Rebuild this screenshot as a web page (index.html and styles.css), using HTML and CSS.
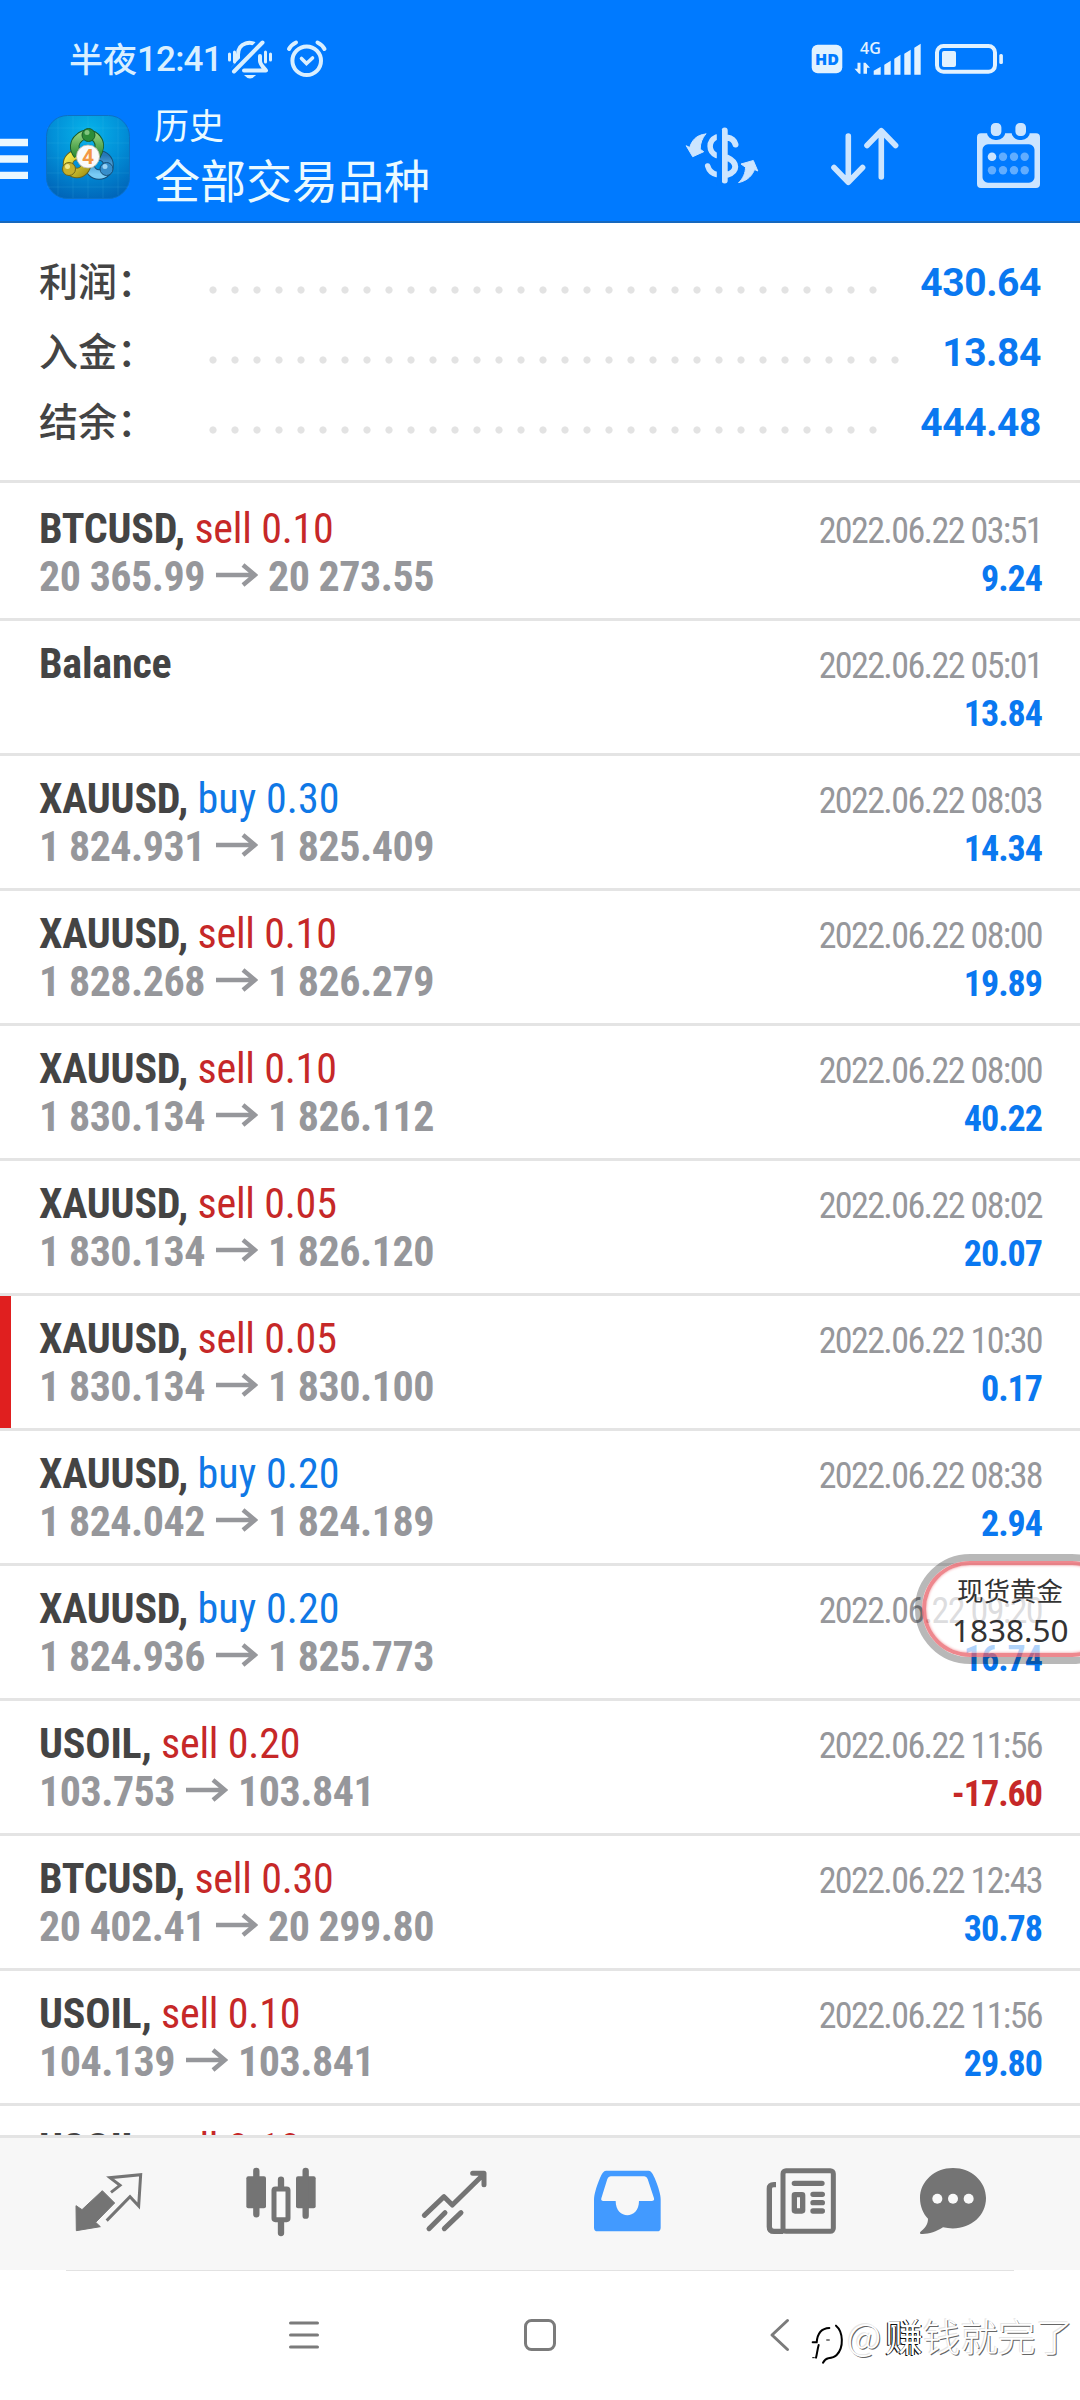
FILE: index.html
```html
<!DOCTYPE html>
<html lang="zh-CN">
<head>
<meta charset="utf-8">
<title>历史</title>
<link rel="stylesheet" href="styles.css">
</head>
<body>
<svg width="0" height="0" class="defs">
  <defs>
    <symbol id="arrow" viewBox="0 0 42 24"><path d="M0 12H39M27 2l12 10-12 10" fill="none" stroke="#96979b" stroke-width="4.4"/></symbol>
  </defs>
</svg>
<div class="screen">
  <header class="header">
    <div class="status">
      <span class="clock"><span class="clock-cjk">半夜</span><span class="clock-num">12:41</span></span>
      <svg class="status-left" width="102" height="42" viewBox="226 39 102 42" fill="none" stroke="#d9efff" stroke-linecap="round">
        <path d="M233 68.500c3-3 5-5 5-9v-5c0-12 14-15 20-8M260 56v5c0 3 3 6 6 9.500h-22" stroke-width="4" stroke-linejoin="round"/>
        <path d="M234 71l28-29" stroke="#007aff" stroke-width="9"/>
        <path d="M234 71.500l28.500-29" stroke-width="4"/>
        <path d="M229.500 54v6M234.500 52v10M265.500 52v10M270.500 54v6" stroke-width="3"/>
        <path d="M244 75h12q-6 7-12 0z" fill="#d9efff" stroke="none"/>
        <circle cx="306.700" cy="60.700" r="14.300" stroke-width="4"/>
        <path d="M301.500 58.500l5 5 6-5.500" stroke-width="3.600"/>
        <path d="M289 49q2-4 7-6.500M324.500 49q-2-4-7-6.500" stroke-width="4"/>
      </svg>
      <svg class="status-right" width="194" height="40" viewBox="811 37 194 40" fill="#e2f2ff">
        <rect x="811.700" y="44.700" width="30.600" height="28.500" rx="6"/>
        <text class="hd" x="827" y="64.700" text-anchor="middle">HD</text>
        <text class="net" x="860" y="54.300">4G</text>
        <path d="M860.500 62.700v11l-1.500 0-4.500-5h3v-6zM863.500 73.700v-11l2 0 4.500 5h-3v6z"/>
        <path d="M873.700 74.700v-4l7-4v8zM884.300 74.700v-10l6.400-4v14zM894.300 74.700v-16l6.200-4v20zM904.300 74.700v-21l6.400-4v25zM914.300 74.700v-27l6.400-4v31z"/>
        <rect x="937" y="46" width="58" height="25.700" rx="6.500" fill="none" stroke="#e2f2ff" stroke-width="4"/>
        <rect x="942" y="51" width="14" height="16" rx="2"/>
        <rect x="999.300" y="54" width="3.600" height="10" rx="1.500"/>
      </svg>
    </div>
    <div class="bar">
      <svg class="menu" width="28" height="42" viewBox="0 138 28 42" fill="#ebf8ff"><path d="M0 138.700h28v7.500H0zM0 155.200h28v7.500H0zM0 171.700h28v7.300H0z"/></svg>
      <svg class="logo" width="84" height="84" viewBox="0 0 84 84">
        <defs>
          <radialGradient id="bg" cx=".5" cy=".2" r=".85"><stop offset="0" stop-color="#06b3ea"/><stop offset=".5" stop-color="#0290d8"/><stop offset="1" stop-color="#0064b8"/></radialGradient>
          <linearGradient id="g" x2="0" y2="1"><stop stop-color="#8fd07c"/><stop offset="1" stop-color="#2e8b35"/></linearGradient>
          <linearGradient id="y" x2="1" y2="1"><stop stop-color="#f4ea4e"/><stop offset="1" stop-color="#ab9b18"/></linearGradient>
          <linearGradient id="b" x2="0" y2="1"><stop stop-color="#2678b8"/><stop offset="1" stop-color="#79cbf5"/></linearGradient>
        </defs>
        <rect x=".5" y=".5" width="83" height="83" rx="21" fill="url(#bg)" stroke="#0c70c4"/>
        <path d="M12 3v77M27 1v82M42 1v82M57 1v82M72 3v77M1 13h82M1 28h82M1 43h82M1 58h82M1 72h82" stroke="#5cc8f0" stroke-opacity=".13"/>
        <g fill="none">
          <circle cx="53" cy="50" r="9.500" stroke="#174f77" stroke-width="10.500"/>
          <circle cx="53" cy="50" r="9.500" stroke="url(#b)" stroke-width="8.500"/>
          <circle cx="31" cy="49" r="9" stroke="#6b651b" stroke-width="10.500"/>
          <circle cx="31" cy="49" r="9" stroke="url(#y)" stroke-width="8.500"/>
          <path d="M32 40c-5-6-4-13 1-17 5-5 14-5 18 1 4 5 2 12-1 17" stroke="#195b2a" stroke-width="9.500"/>
          <path d="M32 40c-5-6-4-13 1-17 5-5 14-5 18 1 4 5 2 12-1 17" stroke="url(#g)" stroke-width="7.500"/>
        </g>
        <circle cx="42.500" cy="20" r="6.500" fill="#2c8c38" stroke="#195b2a"/>
        <circle cx="41" cy="17.500" r="2.500" fill="#a4dd9b" opacity=".7"/>
        <circle cx="23" cy="54" r="6.500" fill="#c5b02b" stroke="#6b651b"/>
        <circle cx="21.500" cy="51.500" r="2.500" fill="#fbf5a2" opacity=".8"/>
        <circle cx="60.500" cy="54" r="6.500" fill="#378ecb" stroke="#174f77"/>
        <circle cx="59" cy="51.500" r="2.500" fill="#b7e6ff" opacity=".8"/>
        <circle cx="42" cy="41.500" r="11.500" fill="#fafafa" stroke="#b9b9a9" stroke-width=".8"/>
        <text class="four" x="42" y="49" text-anchor="middle">4</text>
      </svg>
      <div class="titles">
        <div class="title">历史</div>
        <div class="subtitle">全部交易品种</div>
      </div>
      <div class="actions">
        <svg width="76" height="68" viewBox="684 121 76 68" fill="none" stroke="#cce5ff" stroke-width="6" stroke-linecap="round">
          <path d="M724.700 130.500v50M727 137.500q7 1 8.500 7M727 157.500c11 5 11 14 0 17.500"/>
          <path d="M716.500 137c-8.500 4-8.500 14.500 0 18.500M707.700 166q2 7 9 8.500" stroke-width="5.500"/>
          <path d="M716.800 130h5.200v56h-5.200z" fill="#007aff" stroke="none"/>
          <path d="M705.700 134c-10 1-14 7-16 13.500l-3.500-1.800 6.500 11 11-5-3.500-2.500c0-6 2-11 5.500-15.200z" fill="#cce5ff" stroke="#cce5ff" stroke-width="1" stroke-linejoin="round"/>
          <path d="M739 182.500c9-2 13.500-7.500 15.500-13l3.300 1.500-4.500-10.500-12.300 3.500 4.500 3.200c0 6-2.500 11-6.500 15.300z" fill="#cce5ff" stroke="#cce5ff" stroke-width="1" stroke-linejoin="round"/>
        </svg>
        <svg width="72" height="68" viewBox="829 121 72 68" fill="none" stroke="#cce5ff" stroke-width="5.600" stroke-linecap="round" stroke-linejoin="round">
          <path d="M848.300 136v46M834 167.500l14.300 14.800 14.300-14.800M881.300 177v-46M867 145.500l14.300-14.800 14.300 14.800"/>
        </svg>
        <svg width="64" height="68" viewBox="977 121 64 68" fill="#cce5ff">
          <path fill-rule="evenodd" d="M981 133.300h55a4 4 0 0 1 4 4V184a4 4 0 0 1-4 4h-55a4 4 0 0 1-4-4v-46.700a4 4 0 0 1 4-4zM988 144.300a5.500 5.500 0 0 0-5.500 5.500v27.400a5.500 5.500 0 0 0 5.500 5.500h41a5.500 5.500 0 0 0 5.500-5.500v-27.400a5.500 5.500 0 0 0-5.500-5.500z"/>
          <g stroke="#007aff" stroke-width="4"><rect x="988.800" y="121" width="14.600" height="17" rx="6.500"/><rect x="1013.400" y="121" width="14.600" height="17" rx="6.500"/></g>
          <circle cx="992" cy="156.700" r="4.300"/>
          <g fill="#61adff"><circle cx="1003" cy="156.700" r="4.200"/><circle cx="1014" cy="156.700" r="4.200"/><circle cx="1024.700" cy="156.700" r="4.200"/><circle cx="992" cy="170.300" r="4.200"/><circle cx="1003" cy="170.300" r="4.200"/><circle cx="1014" cy="170.300" r="4.200"/><circle cx="1024.700" cy="170.300" r="4.200"/></g>
        </svg>
      </div>
    </div>
  </header>

  <section class="summary">
    <div class="sum-row"><span class="label">利润：</span><span class="dots"></span><span class="value">430.64</span></div>
    <div class="sum-row"><span class="label">入金：</span><span class="dots dots-long"></span><span class="value">13.84</span></div>
    <div class="sum-row"><span class="label">结余：</span><span class="dots"></span><span class="value">444.48</span></div>
  </section>

  <main class="list">
    <article class="deal"><div class="line"><span class="symbol">BTCUSD, <span class="sell">sell 0.10</span></span><span class="date">2022.06.22 03:51</span></div><div class="line"><span class="price">20 365.99<svg class="to"><use href="#arrow"/></svg>20 273.55</span><span class="profit">9.24</span></div></article>
    <article class="deal"><div class="line"><span class="symbol">Balance</span><span class="date">2022.06.22 05:01</span></div><div class="line"><span class="price">&nbsp;</span><span class="profit">13.84</span></div></article>
    <article class="deal"><div class="line"><span class="symbol">XAUUSD, <span class="buy">buy 0.30</span></span><span class="date">2022.06.22 08:03</span></div><div class="line"><span class="price">1 824.931<svg class="to"><use href="#arrow"/></svg>1 825.409</span><span class="profit">14.34</span></div></article>
    <article class="deal"><div class="line"><span class="symbol">XAUUSD, <span class="sell">sell 0.10</span></span><span class="date">2022.06.22 08:00</span></div><div class="line"><span class="price">1 828.268<svg class="to"><use href="#arrow"/></svg>1 826.279</span><span class="profit">19.89</span></div></article>
    <article class="deal"><div class="line"><span class="symbol">XAUUSD, <span class="sell">sell 0.10</span></span><span class="date">2022.06.22 08:00</span></div><div class="line"><span class="price">1 830.134<svg class="to"><use href="#arrow"/></svg>1 826.112</span><span class="profit">40.22</span></div></article>
    <article class="deal"><div class="line"><span class="symbol">XAUUSD, <span class="sell">sell 0.05</span></span><span class="date">2022.06.22 08:02</span></div><div class="line"><span class="price">1 830.134<svg class="to"><use href="#arrow"/></svg>1 826.120</span><span class="profit">20.07</span></div></article>
    <article class="deal marked"><div class="line"><span class="symbol">XAUUSD, <span class="sell">sell 0.05</span></span><span class="date">2022.06.22 10:30</span></div><div class="line"><span class="price">1 830.134<svg class="to"><use href="#arrow"/></svg>1 830.100</span><span class="profit">0.17</span></div></article>
    <article class="deal"><div class="line"><span class="symbol">XAUUSD, <span class="buy">buy 0.20</span></span><span class="date">2022.06.22 08:38</span></div><div class="line"><span class="price">1 824.042<svg class="to"><use href="#arrow"/></svg>1 824.189</span><span class="profit">2.94</span></div></article>
    <article class="deal"><div class="line"><span class="symbol">XAUUSD, <span class="buy">buy 0.20</span></span><span class="date">2022.06.22 09:20</span></div><div class="line"><span class="price">1 824.936<svg class="to"><use href="#arrow"/></svg>1 825.773</span><span class="profit">16.74</span></div></article>
    <article class="deal"><div class="line"><span class="symbol">USOIL, <span class="sell">sell 0.20</span></span><span class="date">2022.06.22 11:56</span></div><div class="line"><span class="price">103.753<svg class="to"><use href="#arrow"/></svg>103.841</span><span class="profit loss">-17.60</span></div></article>
    <article class="deal"><div class="line"><span class="symbol">BTCUSD, <span class="sell">sell 0.30</span></span><span class="date">2022.06.22 12:43</span></div><div class="line"><span class="price">20 402.41<svg class="to"><use href="#arrow"/></svg>20 299.80</span><span class="profit">30.78</span></div></article>
    <article class="deal"><div class="line"><span class="symbol">USOIL, <span class="sell">sell 0.10</span></span><span class="date">2022.06.22 11:56</span></div><div class="line"><span class="price">104.139<svg class="to"><use href="#arrow"/></svg>103.841</span><span class="profit">29.80</span></div></article>
    <article class="deal"><div class="line"><span class="symbol">USOIL, <span class="sell">sell 0.10</span></span></div></article>
  </main>

  <nav class="tabs">
    <svg viewBox="24 96 240 240"><path d="M48 227l18 12 61-57 37 37-57 58 14 13-72 12z" fill="#747474" stroke="#747474" stroke-width="3" stroke-linejoin="round"/><path d="M153 187l27-21-30-23 92-9-6 94-26-28-70 72" fill="none" stroke="#747474" stroke-width="9"/></svg>
    <svg viewBox="543 96 240 240" fill="#747474"><rect x="559" y="139" width="59" height="96" rx="6"/><rect x="708" y="139" width="59" height="96" rx="6"/><path d="M589 123v130M737 123v134M663 149v26M663 270v39" stroke="#747474" stroke-width="19" stroke-linecap="round"/><rect x="642" y="177" width="42" height="92" rx="4" fill="#f9f9f9" stroke="#747474" stroke-width="15"/></svg>
    <svg viewBox="1062 96 240 240" fill="none" stroke="#747474" stroke-width="15" stroke-linecap="round" stroke-linejoin="round"><path d="M1093 256l59-56 25 25 94-92M1238 130h34v34"/><path d="M1107 296l48-48M1153 296l50-48"/></svg>
    <svg viewBox="21 96 240 240"><path fill="#429aff" fill-rule="evenodd" d="M78 122h128c7 0 12 9 18 22 12 28 18 52 18 64v85q0 11-11 11H53q-11 0-11-11v-85c0-12 6-36 18-64 6-13 11-22 18-22zM92 139q-7 0-10 8l-18 58q-2 8 6 8h37c0 57 70 57 70 0h38q9 0 7-8l-19-58q-3-8-10-8z"/></svg>
    <svg viewBox="543 96 240 240" fill="none" stroke="#747474"><rect x="609" y="122" width="151" height="182" rx="9" stroke-width="15"/><path d="M588 164h-6q-14 0-14 12v114q0 14 14 14h28" stroke-width="16"/><path d="M643 160h83M699 193h28M699 218h28M699 243h28" stroke-width="16" stroke-linecap="round"/><rect x="643" y="194" width="25" height="49" rx="2" stroke-width="16"/></svg>
    <svg viewBox="999 96 240 240"><path fill="#747474" d="M1119 114c55 0 99 40 99 90 0 60-58 104-129 88-20 13-45 21-64 20-7 0-6-6-1-9 15-12 20-24 20-37-14-14-24-36-24-62 0-50 44-90 99-90z"/><g fill="#f9f9f9"><circle cx="1072" cy="206" r="15"/><circle cx="1119" cy="206" r="15"/><circle cx="1166" cy="206" r="15"/></g></svg>
  </nav>

  <footer class="system">
    <svg width="32" height="34" viewBox="0 0 32 34" stroke="#7b7b7b" stroke-width="3" stroke-linecap="round" fill="none"><path d="M2.500 5h27M2.500 17h27M2.500 29h27"/></svg>
    <svg width="34" height="34" viewBox="0 0 34 34" fill="none" stroke="#7b7b7b" stroke-width="3"><rect x="2.500" y="2.500" width="29" height="29" rx="6"/></svg>
    <svg width="22" height="34" viewBox="0 0 22 34" fill="none" stroke="#7b7b7b" stroke-width="3" stroke-linecap="round" stroke-linejoin="round"><path d="M18.500 2.500l-15.500 14.500 15.500 14.500"/></svg>
  </footer>

  <aside class="ticker"><span class="ticker-name">现货黄金</span><span class="ticker-price">1838.50</span></aside>
  <div class="mark">
    <svg width="34" height="46" viewBox="690 570 102 138" fill="none" stroke="#000" stroke-linecap="round"><path d="M698 634h12c2-24 12-42 38-43" stroke-width="6"/><path d="M716 642c-4 14-5 28-8 38" stroke-width="6"/><path d="M768 584c22 18 24 66 2 88-7 7-18 9-25 10-6 1-12 6-16 13" stroke-width="6"/><path d="M740 627h8M698 680h5" stroke-width="3"/></svg>
    <span class="mark-name"><span class="at">@</span><b>赚</b>钱就完了</span>
  </div>
</div>
</body>
</html>
```
FILE: styles.css
```css
* { box-sizing: border-box; }
body { margin: 0; background: #fff; }
svg { display: block; flex: none; }
.defs { position: absolute; }

.screen {
  position: relative;
  width: 1080px;
  height: 2400px;
  overflow: hidden;
  display: flex;
  flex-direction: column;
  background: #fff;
  font-family: "Roboto Condensed", Roboto, "Noto Sans CJK SC", sans-serif;
}

/* header */
.header {
  height: 223px;
  flex: none;
  background: #007aff;
  border-bottom: 2px solid #1768bd;
}
.status {
  height: 78px;
  padding: 37px 75px 0 69px;
  display: flex;
  align-items: flex-start;
}
.clock {
  display: flex;
  width: 157px;
  height: 42px;
  color: #d9efff;
  white-space: nowrap;
}
.clock-cjk { font: 500 34px/42px "Noto Sans CJK SC", sans-serif; }
.clock-num { margin-top: 2px; font: 500 35px/42px Roboto, sans-serif; letter-spacing: -0.800px; }
.status-left { margin-top: 2px; }
.status-right { margin: 0 0 0 auto; }
.hd { font: 800 16px "Open Sans", sans-serif; fill: #007aff; }
.net { font: 600 16px "Open Sans", sans-serif; }

.bar { display: flex; height: 143px; }
.menu { margin-top: 60px; }
.logo { margin: 37px 0 0 18px; }
.four { font: 700 21px Roboto, sans-serif; fill: #f39743; }
.titles {
  margin: 20px 0 0 24px;
  color: #ebfaff;
  font-family: "Noto Sans CJK SC", sans-serif;
  white-space: nowrap;
}
.title { font-size: 35px; line-height: 52px; }
.subtitle { font-size: 46px; line-height: 56px; }
.actions { display: flex; margin: 43px 39px 0 auto; }
.actions svg + svg { margin-left: 69px; }
.actions svg:last-child { margin-left: 76px; }

/* totals */
.summary { height: 257px; flex: none; padding: 23px 39px 0; }
.sum-row { display: flex; align-items: center; height: 70px; }
.label {
  width: 163px;
  margin-top: -5px;
  font: 500 39px/70px "Noto Sans CJK SC", sans-serif;
  color: #444;
  white-space: nowrap;
}
.dots {
  width: 682px;
  height: 10px;
  margin-top: 17px;
  background: radial-gradient(circle at 11px 5px, #e3e3e3 3.200px, transparent 4px) 0 0 / 22px 10px repeat-x;
}
.dots-long { width: 704px; }
.value {
  margin: 3px 0 0 auto;
  font: 700 39px/70px Roboto, sans-serif;
  letter-spacing: -0.400px;
  color: #0a78f0;
}

/* deals */
.list { flex: 1; min-height: 0; overflow: hidden; }
.deal {
  height: 135px;
  border-top: 3px solid #e4e4e4;
  padding: 19px 38px 0 39px;
}
.deal:first-child { height: 138px; padding-top: 22px; }
.marked {
  background: linear-gradient(#e01f1f, #e01f1f) 0 0 / 11px 100% no-repeat;
}
.line {
  display: flex;
  justify-content: space-between;
  align-items: baseline;
  height: 48px;
  line-height: 48px;
  white-space: nowrap;
}
.symbol { font-size: 42px; font-weight: 700; color: #444; letter-spacing: -0.200px; }
.sell, .buy { font-weight: 400; letter-spacing: 0; }
.sell { letter-spacing: -0.200px; }
.buy { letter-spacing: 0.100px; }
.sell, .loss { color: #c62828; }
.buy { color: #0f78e6; }
.date { font-size: 36px; letter-spacing: -1.600px; color: #96979b; }
.price { display: flex; font-size: 42px; font-weight: 700; letter-spacing: -0.500px; color: #96979b; }
.to { width: 42px; height: 24px; margin: 10px 10px 0 11px; }
.profit { font-size: 36px; font-weight: 700; letter-spacing: -1px; color: #0a78f0; }
.profit.loss { color: #c62828; }

/* bottom tabs */
.tabs {
  height: 135px;
  flex: none;
  display: flex;
  padding: 24px 0 0 68px;
  border-top: 3px solid #e4e4e4;
  background: #f7f7f7;
}
.tabs svg { width: 80px; height: 80px; margin-right: 93px; }
.tabs svg:nth-child(4) { margin-right: 94px; }
.tabs svg:nth-child(5) { margin-right: 72px; }

.system {
  height: 130px;
  flex: none;
  display: flex;
  padding: 48px 0 0 288px;
  background: linear-gradient(#e2e2e2, #e2e2e2) 66px 0 / 948px 1px no-repeat;
}
.system svg:nth-child(2) { margin-left: 203px; }
.system svg:nth-child(3) { margin-left: 212px; }

/* floating quote */
.ticker {
  position: absolute;
  left: 915px;
  top: 1554px;
  width: 212px;
  height: 110px;
  padding: 14px 0 0 29px;
  border: 7px solid rgba(0, 0, 0, .28);
  border-radius: 55px;
  color: #333;
  white-space: nowrap;
  isolation: isolate;
}
.ticker::before {
  content: "";
  position: absolute;
  inset: 0;
  z-index: -1;
  border: 4px solid rgba(232, 96, 104, .75);
  border-radius: 48px;
  background: rgba(255, 255, 255, .68);
  background-clip: padding-box;
  box-shadow: inset 0 0 3px #ee8c92;
}
.ticker-name {
  display: block;
  margin: -1px 0 0 6px;
  font: 400 26.500px/32px "Noto Sans CJK SC", sans-serif;
}
.ticker-price { display: block; margin: 4px 0 0 1px; font: 400 31.500px/40px "Noto Sans", sans-serif; }

/* author mark */
.mark {
  position: absolute;
  left: 810px;
  top: 2303px;
  display: flex;
  align-items: center;
  font: 300 37.700px/52px "Noto Sans CJK SC", sans-serif;
  color: #fff;
  text-shadow: 1px 1px 0 #666, -1px -1px 0 #e6e6e6;
  white-space: nowrap;
}
.mark svg { margin: 18px 3px 0 0; }
.at { display: inline-block; width: 38px; }
.mark b { font-weight: 400; text-shadow: 1px 0 0 #000, -1px 1px 0 #111; }
```
